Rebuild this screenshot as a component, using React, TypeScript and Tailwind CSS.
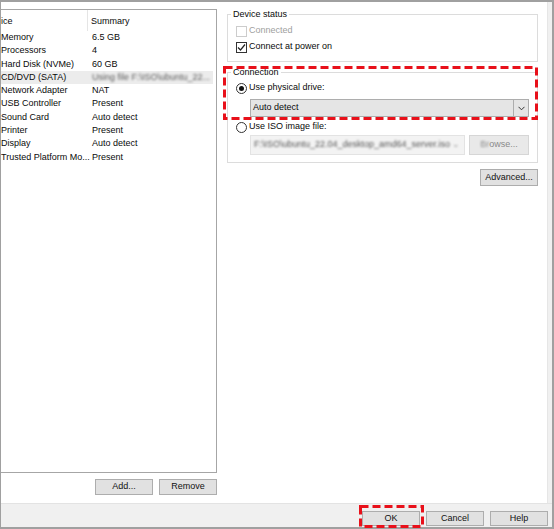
import React from "react";

const rows: [string, string | null][] = [
  ["Memory", "6.5 GB"],
  ["Processors", "4"],
  ["Hard Disk (NVMe)", "60 GB"],
  ["CD/DVD (SATA)", null],
  ["Network Adapter", "NAT"],
  ["USB Controller", "Present"],
  ["Sound Card", "Auto detect"],
  ["Printer", "Present"],
  ["Display", "Auto detect"],
  ["Trusted Platform Mo...", "Present"],
];

function Btn({ children, className = "" }: { children: React.ReactNode; className?: string }) {
  return (
    <div
      className={`flex items-center justify-center w-[58px] border border-[#adadad] bg-[#e1e1e1] text-[#111] ${className}`}
    >
      {children}
    </div>
  );
}

function Check({ checked, disabled }: { checked?: boolean; disabled?: boolean }) {
  return (
    <div
      className={`w-[11px] h-[11px] border bg-white flex items-center justify-center ${
        disabled ? "border-[#cccccc]" : "border-[#333333]"
      }`}
    >
      {checked && (
        <svg width="9" height="9" viewBox="0 0 9 9">
          <polyline points="1,4.5 3.5,7 8,1.5" fill="none" stroke="#222" strokeWidth="1.2" />
        </svg>
      )}
    </div>
  );
}

function Radio({ on }: { on?: boolean }) {
  return (
    <div className="w-[11px] h-[11px] rounded-full border border-[#333333] bg-white flex items-center justify-center">
      {on && <div className="w-[5px] h-[5px] rounded-full bg-[#111]" />}
    </div>
  );
}

export default function App() {
  return (
    <div className="relative w-[554px] h-[529px] flex flex-col border-t-2 border-b-2 border-l border-r-2 border-[#a0a0a0] bg-white text-[9px] text-[#0a0a0a] font-['Liberation_Sans',Arial,sans-serif]">
      {/* body */}
      <div className="flex h-[501px]">
        {/* device list */}
        <div className="w-[216px] flex flex-col">
          <div className="mt-[7px] h-[464px] border-t border-r border-b border-[#a6a6a6] overflow-hidden">
            <div className="flex h-[21px] items-center">
              <div className="w-[87px] shrink-0 h-full border-r border-[#e5e5e5] flex items-center pt-[2px]">ice</div>
              <div className="pl-[3px] pt-[2px]">Summary</div>
            </div>
            {rows.map(([name, value]) => (
              <div
                key={name}
                className={`flex h-[13.3px] items-center mr-[3px] overflow-hidden ${value === null ? "bg-[#ececec]" : ""}`}
              >
                <div className="w-[88px] shrink-0 whitespace-nowrap">{name}</div>
                {value === null ? (
                  <div className="pl-[3px] whitespace-nowrap text-[#5a5a5a] blur-[1.1px]">
                    Using file F:\ISO\ubuntu_22...
                  </div>
                ) : (
                  <div className="pl-[3px] whitespace-nowrap">{value}</div>
                )}
              </div>
            ))}
          </div>
          <div className="mt-[6px] flex justify-end gap-[6px]">
            <Btn className="h-[16px]">Add...</Btn>
            <Btn className="h-[16px]">Remove</Btn>
          </div>
        </div>

        {/* settings panel */}
        <div className="w-[330px] pl-[10px] flex flex-col">
          <fieldset className="mt-[5px] w-[311px] border border-[#dcdcdc] px-[8px] pb-[7px]">
            <legend className="px-[2px] -ml-[5px] leading-[13px] pt-[1px]">Device status</legend>
            <div className="mt-[3px] flex items-center gap-[2px] h-[14px] text-[#a0a0a0]">
              <Check disabled />
              <span>Connected</span>
            </div>
            <div className="mt-[2px] flex items-center gap-[2px] h-[14px]">
              <Check checked />
              <span>Connect at power on</span>
            </div>
          </fieldset>

          <fieldset className="mt-[3px] w-[311px] border border-[#dcdcdc] px-[8px] pb-[7px]">
            <legend className="px-[2px] -ml-[5px] leading-[13px] pt-[1px]">Connection</legend>
            <div className="mt-[2px] flex items-center gap-[2px] h-[14px]">
              <Radio on />
              <span>Use physical drive:</span>
            </div>
            <div className="mt-[4px] ml-[14px] h-[18px] flex border border-[#adadad] bg-[#e5e5e5]">
              <div className="flex-1 flex items-center pl-[2px]">Auto detect</div>
              <div className="w-[15px] border-l border-[#adadad] flex items-center justify-center">
                <svg width="7" height="5" viewBox="0 0 7 5">
                  <polyline points="0.5,0.8 3.5,3.8 6.5,0.8" fill="none" stroke="#333" strokeWidth="1" />
                </svg>
              </div>
            </div>
            <div className="mt-[3px] flex items-center gap-[2px] h-[14px]">
              <Radio />
              <span>Use ISO image file:</span>
            </div>
            <div className="mt-[1px] ml-[14px] h-[20px] flex gap-[4px]">
              <div className="w-[215px] flex items-center border border-[#e3e3e3] bg-[#f3f3f3] overflow-hidden">
                <span className="pl-[3px] whitespace-nowrap text-[#555] blur-[1.2px]">
                  F:\ISO\ubuntu_22.04_desktop_amd64_server.iso
                </span>
                <span className="ml-auto pr-[4px] text-[#999] blur-[0.8px]">⌄</span>
              </div>
              <div className="flex-1 flex items-center justify-center border border-[#d6d6d6] bg-[#e9e9e9] text-[#8a8a8a]">
                <span className="blur-[1px]">Br</span>owse...
              </div>
            </div>
          </fieldset>

          <div className="mt-[6px] w-[311px] flex justify-end">
            <Btn className="h-[17px]">Advanced...</Btn>
          </div>
        </div>

        <div className="flex-1 border-l border-[#e6e6e6] bg-[#f0f0f0]" />
      </div>

      {/* footer */}
      <div className="flex-1 border-t border-[#e3e3e3] bg-[#f0f0f0] flex justify-end items-start gap-[6px] pt-[7px] pr-[4px]">
        <Btn className="h-[15px] border-[#0078d7]">OK</Btn>
        <Btn className="h-[15px]">Cancel</Btn>
        <Btn className="h-[15px]">Help</Btn>
      </div>

      {/* annotation overlays */}
      <svg className="absolute left-[222px] top-[64px]" width="315" height="54">
        <rect x="1.5" y="1.5" width="312" height="51" fill="none" stroke="#e8101a" strokeWidth="3" strokeDasharray="8 4" />
      </svg>
      <svg className="absolute left-[358px] top-[503px]" width="65" height="23">
        <rect x="1.5" y="1.5" width="62" height="20" fill="none" stroke="#e8101a" strokeWidth="3" strokeDasharray="8 4" />
      </svg>
    </div>
  );
}
